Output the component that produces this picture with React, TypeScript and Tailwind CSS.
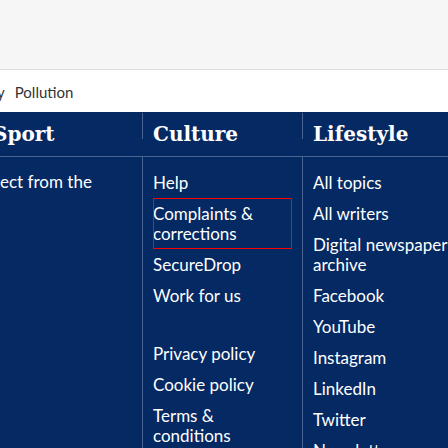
import React from "react";

const sans = { fontFamily: "Lato, 'Open Sans', sans-serif" };
const serif = { fontFamily: "'DejaVu Serif', 'Liberation Serif', serif" };

function Item({ children, boxed }: { children: React.ReactNode; boxed?: boolean }) {
  return (
    <li
      className={
        "text-[17px] leading-[20px] py-[5.5px] text-white " +
        (boxed ? "outline outline-1 outline-[#ff0000] -outline-offset-1" : "")
      }
    >
      {children}
    </li>
  );
}

export default function App() {
  return (
    <div className="w-[448px] h-[448px] overflow-hidden bg-[#052962]" style={sans}>
      <div className="h-[70px] bg-[#f6f6f6] border-b border-[#dcdcdc]" />
      <div className="h-[42px] bg-white flex items-center gap-[10px] text-[15px] text-[#333333] pt-[2px]">
        <span className="-ml-[3px]">y</span>
        <span>Pollution</span>
      </div>
      <div className="flex -ml-[18px] w-[520px]">
        {/* column 1 */}
        <div className="w-[160px] shrink-0 border-l border-[#4a6490]">
          <div className="h-[45px] border-b border-[#4a6490] px-[10px] pt-[10px]">
            <h2 className="text-[20px] leading-[24px] font-bold text-white" style={serif}>Sport</h2>
          </div>
          <div className="pt-[11px] px-[10px]">
            <p className="text-[17px] leading-[20px] py-[4px] text-white ml-[7px] whitespace-nowrap">ect from the</p>
          </div>
        </div>
        {/* column 2 */}
        <div className="w-[160px] shrink-0">
          <div className="h-[45px] border-b border-[#4a6490] flex">
            <div className="w-px h-[26px] mt-[1px] bg-[#4a6490]" />
            <h2 className="pl-[10px] pt-[10px] text-[20px] leading-[24px] font-bold text-white" style={serif}>Culture</h2>
          </div>
          <div className="border-l border-[#4a6490] pl-[10px] pr-[10px] pt-[10px] h-[400px]">
            <ul>
              <Item>Help</Item>
              <Item boxed>Complaints &amp; corrections</Item>
              <Item>SecureDrop</Item>
              <Item>Work for us</Item>
            </ul>
            <ul className="mt-[27px]">
              <Item>Privacy policy</Item>
              <Item>Cookie policy</Item>
              <Item>Terms &amp; conditions</Item>
            </ul>
          </div>
        </div>
        {/* column 3 */}
        <div className="w-[160px] shrink-0">
          <div className="h-[45px] border-b border-[#4a6490] flex">
            <div className="w-px h-[26px] mt-[1px] bg-[#4a6490]" />
            <h2 className="pl-[10px] pt-[10px] text-[20px] leading-[24px] font-bold text-white whitespace-nowrap" style={serif}>Lifestyle</h2>
          </div>
          <div className="border-l border-[#4a6490] pl-[10px] pt-[10px] h-[400px]">
            <ul className="w-[150px]">
              <Item>All topics</Item>
              <Item>All writers</Item>
              <Item>
                <span className="whitespace-nowrap">Digital newspaper</span>
                <br />archive
              </Item>
              <Item>Facebook</Item>
              <Item>YouTube</Item>
              <Item>Instagram</Item>
              <Item>LinkedIn</Item>
              <Item>Twitter</Item>
              <Item>Newsletters</Item>
            </ul>
          </div>
        </div>
      </div>
    </div>
  );
}
